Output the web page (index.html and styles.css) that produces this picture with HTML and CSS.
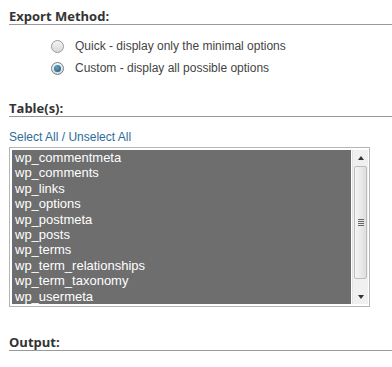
FILE: index.html
```html
<!DOCTYPE html>
<html lang="en">
<head>
  <meta charset="UTF-8" />
  <title>Export</title>
  <link rel="stylesheet" href="styles.css">
</head>
<body>
  <h3 class="section-title first">Export Method:</h3>
  <div class="methods">
    <label class="method"><span class="radio"></span>Quick - display only the minimal options</label>
    <label class="method"><span class="radio checked"></span>Custom - display all possible options</label>
  </div>

  <h3 class="section-title tables">Table(s):</h3>
  <div class="select-links"><a href="#">Select All</a> / <a href="#">Unselect All</a></div>

  <div class="listbox">
    <ul class="options">
      <li>wp_commentmeta</li>
      <li>wp_comments</li>
      <li>wp_links</li>
      <li>wp_options</li>
      <li>wp_postmeta</li>
      <li>wp_posts</li>
      <li>wp_terms</li>
      <li>wp_term_relationships</li>
      <li>wp_term_taxonomy</li>
      <li>wp_usermeta</li>
    </ul>
    <div class="scrollbar">
      <div class="arrow up"></div>
      <div class="track">
        <div class="thumb"><span class="grip"></span></div>
      </div>
      <div class="arrow down"></div>
    </div>
  </div>

  <h3 class="section-title output">Output:</h3>
</body>
</html>
```

FILE: styles.css
```css
* { box-sizing: border-box; margin: 0; padding: 0; }
body {
  font-family: "Liberation Sans", Arial, sans-serif;
  font-size: 12px;
  color: #333;
  background: #fff;
  padding: 8px 0 0 9px;
}

.section-title {
  font-family: "Open Sans", "Liberation Sans", sans-serif;
  font-size: 13px;
  font-weight: bold;
  color: #333;
  line-height: 16px;
  border-bottom: 1px solid #999;
}

.methods {
  margin-top: 10px;
  padding-left: 42px;
}

.method {
  display: flex;
  align-items: center;
  height: 22px;
  color: #444;
}

.radio {
  width: 13px;
  height: 13px;
  border-radius: 50%;
  border: 1px solid #9a9a9a;
  background: linear-gradient(#f4f4f4, #d8d8d8);
  margin-right: 11px;
  position: relative;
}

.radio.checked {
  border-color: #6a7f8c;
}

.radio.checked::after {
  content: "";
  position: absolute;
  left: 2px;
  top: 2px;
  width: 7px;
  height: 7px;
  border-radius: 50%;
  background: radial-gradient(circle at 40% 35%, #5fa4c9, #1d4f6e);
}

.section-title.tables { margin-top: 21px; }

.select-links {
  margin-top: 13px;
  height: 14px;
  line-height: 14px;
  color: #2e6b99;
}

.select-links a {
  color: #2e6b99;
  text-decoration: none;
}

.listbox {
  margin-top: 3px;
  width: 361px;
  height: 160px;
  border: 1px solid #b5b5b5;
  padding: 2px 1px 2px 2px;
  display: flex;
  gap: 1px;
}

.options {
  list-style: none;
  flex: 1;
  background: #6e6e6e;
  overflow: hidden;
}

.options li {
  height: 15.4px;
  line-height: 15.4px;
  padding-left: 3px;
  color: #fff;
  font-size: 13px;
}

.scrollbar {
  width: 16px;
  display: flex;
  flex-direction: column;
  background: #f0f0f0;
  border-left: 1px solid #e2e2e2;
}

.arrow {
  height: 15px;
  display: flex;
  align-items: center;
  justify-content: center;
}

.arrow::before {
  content: "";
  border-left: 3px solid transparent;
  border-right: 3px solid transparent;
}

.arrow.up::before { border-bottom: 4px solid #333; }
.arrow.down::before { border-top: 4px solid #333; }

.track {
  flex: 1;
  padding: 1px 0 10px;
}

.thumb {
  height: 113px;
  margin: 0 1px;
  border: 1px solid #bdbdbd;
  border-radius: 2px;
  background: linear-gradient(90deg, #f6f6f6, #dedede);
  display: flex;
  align-items: center;
  justify-content: center;
}

.grip {
  width: 6px;
  height: 7px;
  background: repeating-linear-gradient(#666 0 1px, transparent 1px 2px);
}

.section-title.output { margin-top: 27px; }
```
